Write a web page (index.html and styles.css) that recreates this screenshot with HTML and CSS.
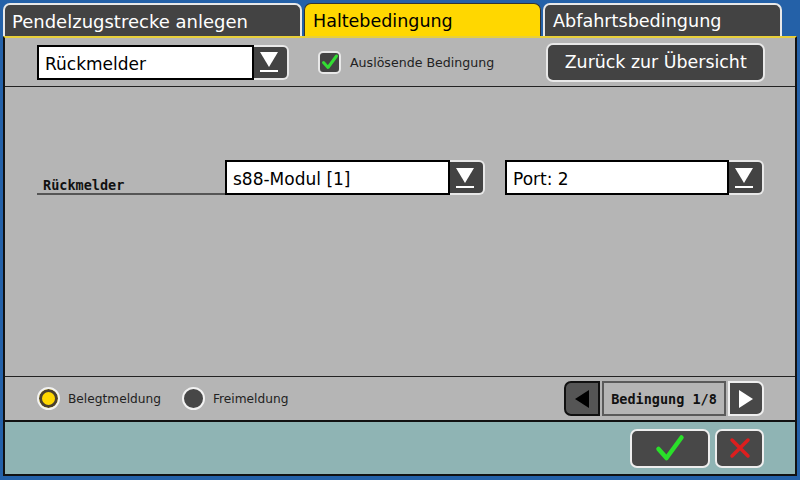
FILE: index.html
```html
<!DOCTYPE html>
<html>
<head>
<meta charset="utf-8">
<link rel="stylesheet" href="styles.css">
</head>
<body>
<div class="screen">
  <div class="tabs">
    <div class="tab tab-1">Pendelzugstrecke anlegen</div>
    <div class="tab tab-active">Haltebedingung</div>
    <div class="tab tab-3">Abfahrtsbedingung</div>
  </div>
  <div class="panel">
    <div class="toprow">
      <div class="select select-type">
        <div class="select-field">Rückmelder</div>
        <div class="drop-btn"><svg width="22" height="24" viewBox="0 0 22 24"><polygon points="2,2 20,2 11,17" fill="#fff"/><rect x="2" y="20" width="18" height="2" fill="#fff"/></svg></div>
      </div>
      <div class="check">
        <div class="checkbox"><svg width="18" height="18" viewBox="0 0 18 18"><path d="M2.5 9.5 L7 14.5 L15.5 3" fill="none" stroke="#33dd33" stroke-width="3" stroke-linecap="round" stroke-linejoin="round"/></svg></div>
        <span class="check-label">Auslösende Bedingung</span>
      </div>
      <div class="back-btn">Zurück zur Übersicht</div>
    </div>
    <div class="middle">
      <div class="field-row">
        <div class="field-label">Rückmelder</div>
        <div class="select select-mod">
          <div class="select-field">s88-Modul [1]</div>
          <div class="drop-btn"><svg width="22" height="24" viewBox="0 0 22 24"><polygon points="2,2 20,2 11,17" fill="#fff"/><rect x="2" y="20" width="18" height="2" fill="#fff"/></svg></div>
        </div>
        <div class="select select-port">
          <div class="select-field">Port: 2</div>
          <div class="drop-btn"><svg width="22" height="24" viewBox="0 0 22 24"><polygon points="2,2 20,2 11,17" fill="#fff"/><rect x="2" y="20" width="18" height="2" fill="#fff"/></svg></div>
        </div>
      </div>
    </div>
    <div class="bottomrow">
      <div class="radios">
        <div class="radio-item"><span class="radio radio-on"></span><span class="radio-label">Belegtmeldung</span></div>
        <div class="radio-item"><span class="radio radio-off"></span><span class="radio-label">Freimeldung</span></div>
      </div>
      <div class="pager">
        <div class="pg-btn pg-prev"><svg width="20" height="22" viewBox="0 0 20 22"><polygon points="17,2 17,20 3,11" fill="#000"/></svg></div>
        <div class="pg-label">Bedingung 1/8</div>
        <div class="pg-btn pg-next"><svg width="20" height="22" viewBox="0 0 20 22"><polygon points="3,2 3,20 17,11" fill="#fff"/></svg></div>
      </div>
    </div>
    <div class="footer">
      <div class="ok-btn"><svg width="30" height="28" viewBox="0 0 30 28"><path d="M3.5 15 L11.5 24 L26.5 3.5" fill="none" stroke="#2ae02a" stroke-width="4.5" stroke-linecap="round" stroke-linejoin="round"/></svg></div>
      <div class="cancel-btn"><svg width="24" height="24" viewBox="0 0 24 24"><path d="M4 4 L20 20 M20 4 L4 20" fill="none" stroke="#dd1e1e" stroke-width="3.5" stroke-linecap="round"/></svg></div>
    </div>
  </div>
</div>
</body>
</html>
```
FILE: styles.css
```css
html, body {
  margin: 0;
  padding: 0;
}
body {
  width: 800px;
  height: 480px;
  background: #2461a8;
  font-family: "DejaVu Sans", sans-serif;
  overflow: hidden;
}
.screen {
  padding: 3px 3px 4px 3px;
  height: 480px;
  box-sizing: border-box;
  display: flex;
  flex-direction: column;
}
.tabs {
  display: flex;
  gap: 2px;
  height: 33px;
  align-items: stretch;
}
.tab {
  box-sizing: border-box;
  font-size: 18px;
  padding: 7px 0 0 8px;
  border-radius: 7px 7px 0 0;
  white-space: nowrap;
}
.tab-1 {
  width: 299px;
  background: #434343;
  color: #fff;
  border: 2px solid #e8e8e8;
  border-bottom: none;
  padding-left: 7px;
  padding-top: 6px;
}
.tab-active {
  width: 237px;
  background: #ffd700;
  color: #000;
  border: 1px solid #333;
  border-bottom: none;
  padding-top: 7px;
  font-size: 17.5px;
}
.tab-3 {
  width: 239px;
  background: #434343;
  color: #fff;
  border: 2px solid #e8e8e8;
  border-bottom: none;
  padding-top: 6px;
  font-size: 17.6px;
}
.panel {
  flex: 1;
  display: flex;
  flex-direction: column;
  background: #b5b5b5;
  border-left: 2px solid #111;
  border-right: 2px solid #111;
  border-bottom: 2px solid #111;
  border-top: 2px solid #e8cf3a;
}
.toprow {
  height: 48px;
  display: flex;
  align-items: center;
  padding-left: 32px;
  border-bottom: 1px solid #222;
}
.select {
  display: flex;
  height: 35px;
}
.select-field {
  box-sizing: border-box;
  background: #fff;
  border: 2px solid #000;
  font-size: 17px;
  padding: 7px 0 0 6px;
  color: #000;
  white-space: nowrap;
}
.drop-btn {
  box-sizing: border-box;
  width: 35px;
  height: 35px;
  background: #434343;
  border: 2px solid #e8e8e8;
  border-left: none;
  border-radius: 0 6px 6px 0;
  display: flex;
  align-items: center;
  justify-content: center;
}
.drop-btn svg {
  margin-left: -3px;
}
.select-type .select-field {
  width: 217px;
}
.check {
  display: flex;
  align-items: center;
  margin-left: 29px;
}
.checkbox {
  box-sizing: border-box;
  width: 23px;
  height: 23px;
  background: #434343;
  border: 2px solid #e8e8e8;
  border-radius: 5px;
  display: flex;
  align-items: center;
  justify-content: center;
}
.check-label {
  font-size: 12.6px;
  color: #222;
  margin-left: 9px;
}
.back-btn {
  box-sizing: border-box;
  margin-left: 52px;
  width: 219px;
  height: 39px;
  background: #434343;
  border: 2px solid #e8e8e8;
  border-radius: 7px;
  color: #fff;
  font-size: 17.4px;
  display: flex;
  align-items: center;
  justify-content: center;
}
.middle {
  height: 289px;
  border-bottom: 1px solid #222;
}
.field-row {
  display: flex;
  align-items: flex-end;
  margin-top: 73px;
  padding-left: 32px;
}
.field-label {
  box-sizing: border-box;
  width: 188px;
  font-family: "DejaVu Sans Mono", monospace;
  font-weight: bold;
  font-size: 13.5px;
  color: #111;
  padding: 0 0 0 6px;
  border-bottom: 2px solid #555;
}
.select-mod .select-field {
  width: 225px;
}
.select-port {
  margin-left: 20px;
}
.select-port .select-field {
  width: 224px;
}
.bottomrow {
  height: 43px;
  display: flex;
  align-items: center;
  justify-content: space-between;
  padding-left: 32px;
  padding-right: 31px;
  border-bottom: 2px solid #111;
}
.radios {
  display: flex;
  align-items: center;
  gap: 21px;
}
.radio-item {
  display: flex;
  align-items: center;
}
.radio {
  box-sizing: border-box;
  width: 23px;
  height: 23px;
  border-radius: 50%;
  border: 2px solid #f2f2f2;
  display: inline-block;
}
.radio-on {
  background: #ffd700;
  box-shadow: inset 0 0 0 3px #4a4030;
}
.radio-off {
  background: #474747;
}
.radio-label {
  font-size: 12.2px;
  color: #222;
  margin-left: 8px;
}
.pager {
  display: flex;
  align-items: center;
  gap: 2px;
  height: 35px;
}
.pg-btn {
  box-sizing: border-box;
  width: 36px;
  height: 35px;
  background: #484848;
  display: flex;
  align-items: center;
  justify-content: center;
}
.pg-prev {
  border: 2px solid #111;
  border-radius: 7px 0 0 7px;
  background: #555;
}
.pg-next {
  border: 2px solid #eee;
  border-radius: 0 7px 7px 0;
}
.pg-label {
  box-sizing: border-box;
  width: 124px;
  height: 35px;
  border: 2px solid #5a5a5a;
  background: #b5b5b5;
  font-family: "DejaVu Sans Mono", monospace;
  font-weight: bold;
  font-size: 13.5px;
  color: #111;
  display: flex;
  align-items: center;
  justify-content: center;
}
.footer {
  flex: 1;
  background: #8fb4b4;
  display: flex;
  justify-content: flex-end;
  align-items: center;
  padding-right: 31px;
  gap: 5px;
}
.ok-btn, .cancel-btn {
  box-sizing: border-box;
  height: 39px;
  background: #484848;
  border: 2px solid #eee;
  border-radius: 7px;
  display: flex;
  align-items: center;
  justify-content: center;
}
.ok-btn {
  width: 80px;
}
.cancel-btn {
  width: 49px;
}
```
